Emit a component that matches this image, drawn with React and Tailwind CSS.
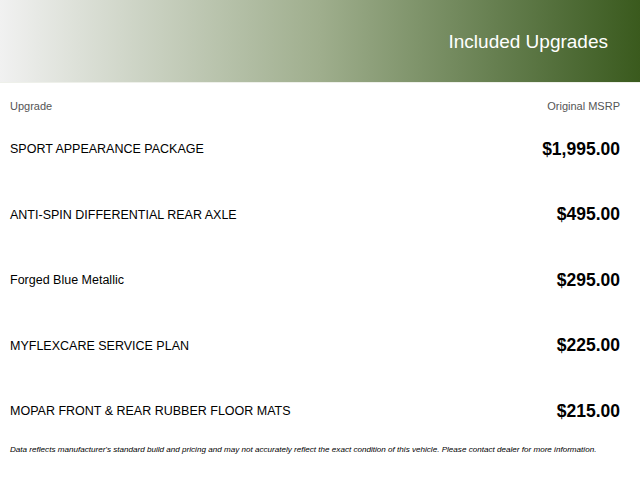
import React from 'react';

const items = [
  { name: 'SPORT APPEARANCE PACKAGE', price: '$1,995.00' },
  { name: 'ANTI-SPIN DIFFERENTIAL REAR AXLE', price: '$495.00' },
  { name: 'Forged Blue Metallic', price: '$295.00' },
  { name: 'MYFLEXCARE SERVICE PLAN', price: '$225.00' },
  { name: 'MOPAR FRONT & REAR RUBBER FLOOR MATS', price: '$215.00' },
];

export default function App() {
  return (
    <div className="w-[640px] h-[480px] bg-white overflow-hidden font-['Liberation_Sans',Arial,sans-serif]">
      {/* Banner */}
      <div className="h-[82px] bg-gradient-to-r from-[#f1f1f1] via-[#9fae8d] to-[#3a5a1d] flex items-center justify-end pr-[32px] shadow-[0_1px_0_#eef0ea]">
        <h1 className="text-white text-[19px] leading-none">Included Upgrades</h1>
      </div>

      <div className="px-[10px] pr-[20px]">
        {/* Column labels */}
        <div className="h-[34px] flex items-end justify-between pb-[2px] text-[11px] text-[#555]">
          <span>Upgrade</span>
          <span>Original MSRP</span>
        </div>

        {items.map((it) => (
          <div key={it.name} className="h-[65.5px] flex items-center justify-between">
            <span className="mt-[2px] text-[12.5px] text-black">{it.name}</span>
            <span className="text-[17.5px] font-bold text-black">{it.price}</span>
          </div>
        ))}

        <p className="text-[8.1px] italic text-black leading-[12px]">
          Data reflects manufacturer's standard build and pricing and may not accurately reflect the exact condition of this vehicle. Please contact dealer for more information.
        </p>
      </div>
    </div>
  );
}
